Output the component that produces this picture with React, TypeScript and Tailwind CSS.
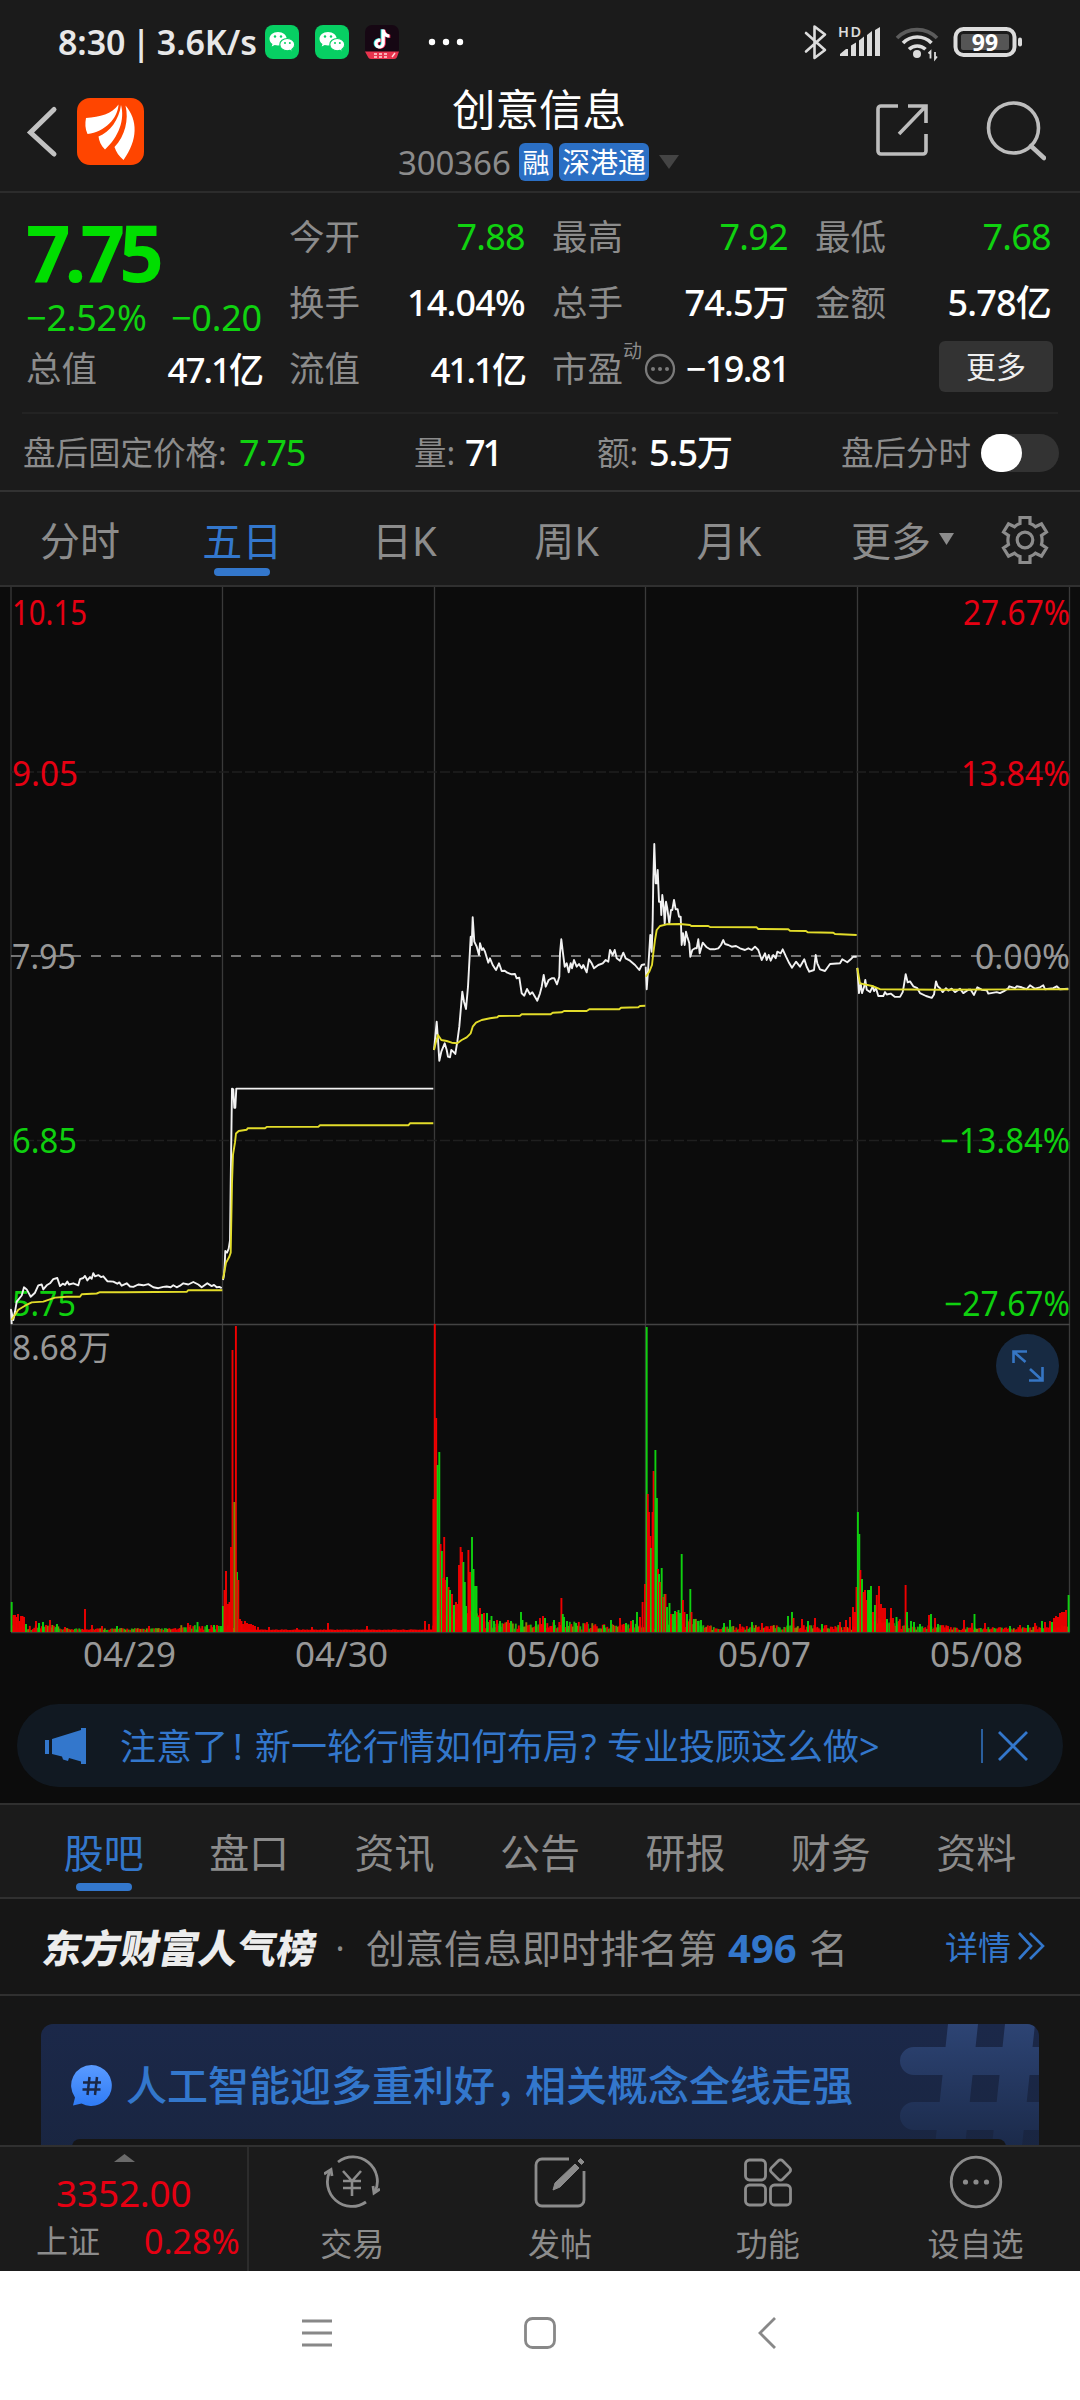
import React from "react";

type Pt = [number, number];

const parse = (s: string): Pt[] =>
  s
    .trim()
    .split(/\s+/)
    .map((p) => p.split(",").map(Number) as Pt);

const toPath = (s: string, sx: number, ox: number, sy: number, oy: number) =>
  "M" +
  parse(s)
    .map(([x, y]) => `${(x / sx + ox).toFixed(1)} ${(y / sy + oy).toFixed(1)}`)
    .join("L");

/* The chart's vertical origin is the top edge of the price pane. */
const TOP = 587;

const priceLines = [
  toPath(
    "35,745 33,710 40,735 45,715 50,690 65,675 72,655 80,660 92,678 105,668 115,650 125,648 130,660 140,650 150,645 160,635 172,632 180,652 188,646 195,649 202,641 207,648 220,645 235,650 240,635 250,632 255,627 262,638 270,630 275,634 280,620 285,628 295,625 303,630 310,628 322,640 340,641 352,646 358,643 365,651 380,645 390,653 400,654 415,648 430,650 445,647 460,655 475,657 490,654 500,653 512,655 520,650 530,655 540,651 550,645 565,648 580,642 595,648 605,655 622,645 635,652 642,649 650,655 658,654 665,657",
    3, 0, 2.45, 1020 - TOP
  ),
  toPath(
    "669,637 672,625 674,600 676,566 681,570 686,560 690,540 692,400 696,168 700,170 703,215 706,215 709,168 1300,168",
    3, 0, 2.45, 1020 - TOP
  ),
  toPath(
    "42,690 50,605 54,660 58,722 64,695 74,670 80,690 84,710 90,712 94,690 100,695 106,702 112,665 118,620 127,515 132,545 138,567 144,500 152,350 155,375 158,292 163,365 170,380 177,405 180,370 186,390 190,385 195,395 205,428 210,415 218,435 228,450 237,430 245,453 254,452 262,458 275,463 285,462 290,475 298,473 305,520 313,527 321,507 330,523 337,517 352,542 360,520 365,500 371,465 377,500 386,480 395,475 403,475 411,493 418,470 420,400 424,358 429,400 434,440 440,430 446,457 452,430 456,445 462,420 470,440 477,432 485,445 490,435 500,457 507,418 515,430 522,445 535,435 548,430 557,420 565,425 570,390 578,405 584,390 590,415 600,422 610,398 617,415 630,422 645,435 658,450 665,435 675,433",
    3, 420, 3, 820 - TOP
  ),
  toPath(
    "677,440 680,508 685,440 691,345 695,395 698,300 700,180 703,72 707,190 710,190 713,150 717,245 722,245 724,285 727,225 731,260 734,312 738,245 742,265 748,310 753,270 757,270 762,240 767,268 773,268 777,290 782,290 785,375 789,340 794,375 798,335 802,350 808,370 811,410 817,390 825,385 830,385 835,358 839,400 848,368 860,382 870,388 883,388 895,385 903,375 910,360 915,372 925,375 935,380 948,378 960,385 975,390 985,385 995,390 1005,380 1015,390 1025,420 1035,400 1040,420 1046,405 1052,422 1060,405 1067,415 1072,395 1082,400 1088,388 1098,410 1108,430 1116,443 1128,425 1140,440 1153,418 1160,440 1168,455 1182,450 1187,405 1192,430 1200,448 1215,453 1230,432 1260,430 1267,418 1282,427 1292,418 1300,410 1310,410",
    3, 420, 3, 820 - TOP
  ),
  toPath(
    "52,140 57,192 62,172 66,192 72,180 76,165 80,185 90,190 98,178 102,188 108,182 115,198 130,198 135,190 140,195 152,193 165,200 180,200 188,190 192,175 197,153 203,170 210,168 220,178 232,182 240,192 258,198 275,202 282,195 288,168 293,178 300,182 308,190 318,182 325,187 335,183 345,190 360,183 370,192 385,185 392,185 402,196 412,180 425,185 440,186 445,193 470,190 480,192 495,187 505,182 508,178 525,182 530,178 545,180 560,184 570,176 585,183 600,180 610,176 615,184 640,182 650,178 660,184 685,183",
    3, 840, 2.063, 900 - TOP
  ),
];

const averageLines = [
  toPath("35,735 55,710 75,700 95,692 130,690 165,680 200,678 240,678 245,672 290,670 300,667 370,667 560,666 565,662 667,662", 3, 0, 2.45, 1020 - TOP),
  toPath("669,635 678,595 688,580 692,570 696,400 699,330 705,300 708,278 716,272 740,269 743,265 795,265 800,262 955,262 960,258 1225,258 1230,253 1300,253", 3, 0, 2.45, 1020 - TOP),
  toPath("42,690 48,665 54,645 64,660 80,663 95,668 112,670 125,660 140,652 152,640 158,620 168,608 185,600 210,595 232,592 236,588 300,587 305,583 392,583 398,578 425,577 432,573 500,573 508,568 598,568 603,563 655,562 660,558 676,557", 3, 420, 3, 820 - TOP),
  toPath("677,470 688,455 696,435 700,400 705,360 710,330 720,318 740,313 780,312 810,315 814,318 865,318 870,321 1010,322 1015,327 1105,328 1110,332 1158,333 1163,337 1240,338 1245,342 1310,345", 3, 420, 3, 820 - TOP),
  toPath("52,140 60,172 100,178 120,184 300,185 685,184", 3, 840, 2.063, 900 - TOP),
];

/* Volume spikes: x, height and colour (r = up, g = down). */
const spikes =
  "11.7,30,g 13.5,17,r 15,17,r 16.5,15,r 18,18,r 19.5,11,r 21,16,r 22.5,16,r 24,15,r 26,8,g 36,11,r 39,9,g 43,10,g 46,7,r 50,12,r 57,8,g 65,5,r 85,23,r 92,7,r 102,6,r 117,6,g 149,6,r 188,9,r 197.5,10,g 207,7,g 214,7,g 217,7,r 221,6,g " +
  "223,26,g 224.5,42,r 226,61,r 228,28,r 229.5,30,r 231,85,r 232.5,282,r 237,60,g 238.3,52,r 235.9,306,r 234.3,130,o 240,13,r 241.5,11,r 243,8,r 245,11,r 247,9,r 249,8,r 251,8,r 253,7,r 255,6,r 258,5,r 269,5,r 297,4,r 312,5,r 328,9,r 367,6,r 425,11,r 429,8,r " +
  "433.4,133,r 434.8,308,r 436.2,214,r 437.7,167,g 439.3,180,g 440.6,88,r 441.8,81,g 443,54,r 444.2,95,r 446,52,r 447,55,g 448.6,45,r 450,42,g 452,38,r 454,27,g 456,30,r 458,28,r 459,67,r 460.6,85,r 462,80,r 463.4,70,g 464.8,50,g 466,26,g 468.4,82,r 470,60,r 472,95,g 473.5,63,g 475,46,g 476.5,46,g 478,15,g 480,24,r 482,18,g 484,19,r 487,19,g 490,12,r 491.5,16,g 494,11,g 497,12,r 500,11,g 508,12,r 511,11,g 521,20,g 522.5,12,g 536,11,g 540,14,r 543,16,r 545,14,g 554,12,g 561.4,34,r 562.8,18,g 564,15,g 567,11,g 576,9,g 587,10,r 604,7,g 611,12,g 620,14,r 626,9,g 631,11,r 633,12,g 637,20,g 640,15,r 642.6,30,r 645,48,r " +
  "646.7,305,g 647.8,138,r 649,120,r 650.4,96,r 651,84,g 652.6,120,r 653.6,161,r 655.4,182,g 656.9,134,g 658,63,r 659,58,g 660,50,r 661.7,64,g 663,35,r 664.5,38,g 665.5,38,r 667,25,g 669.5,29,g 671,18,r 673,18,g 675,21,g 677,20,r 678.5,22,g 680,19,g 681.7,78,g 682.9,32,r 684.5,20,r 687,18,g 690.3,43,g 691.5,20,r 694,13,g 698,11,g 701,12,g 710,6,r 724,9,g 730,12,g 740,8,r 752,10,g 762,9,r 788,16,g 792,20,g 793.5,14,r 802,13,r 808,11,g 815,14,r 822,8,g 840,10,r 846,12,r 850,15,r 853,25,r 855,20,r 856.5,45,r " +
  "857.9,120,g 859.3,98,g 860.4,62,r 862,53,g 863.6,40,r 865,42,r 866.4,32,r 868,42,g 869.5,42,g 871,46,g 873,20,r 875,27,g 876.8,37,r 879,46,r 881,28,r 883,24,r 885,24,r 887,13,g 891,24,r 893,14,r 896.5,15,g 899,11,r 905.6,47,r 907,20,g 911,11,g 914,10,g 920,8,g 929,17,r 931,18,g 935,14,r 938,8,g 948,6,r 964,12,r 972,9,r 974.5,18,g 985,9,r 1010,6,g 1020,7,r 1028,7,g 1035,9,r 1042,11,g 1045,10,r 1050,11,r 1052,10,g 1054,14,r 1056,16,r 1058,15,r 1060,19,r 1062,20,r 1064,20,r 1066,22,r 1068.6,37,g";

const tint: Record<string, string> = { r: "#f00000", g: "#0fd00f", o: "#8a8200" };

function buildVolume() {
  const bars: { x: number; h: number; c: string }[] = [];
  for (let i = 0; i < 705; i++) {
    const x = 11.8 + i * 1.5;
    if (x > 1068) break;
    const n = Math.abs(Math.sin(i * 12.9898) * 43758.5453) % 1;
    const m = Math.abs(Math.sin(i * 78.233) * 12543.123) % 1;
    let base = 2 + n * 5;
    if (x > 60 && x < 180) base = 2 + n * 2;
    if (x > 240 && x < 433) base = 2 + n * 0.6;
    if (x > 480 && x < 580) base = 3 + n * 8;
    if (x > 580 && x < 646) base = 2 + n * 7;
    if (x > 660 && x < 700) base = 4 + n * 12;
    if (x > 857 && x < 900) base = 6 + n * 9;
    if (x > 434 && x < 480) base = 12 + n * 12;
    if (x > 950 && x < 1030) base = 2 + n * 3;
    const quiet = x > 240 && x < 433;
    bars.push({ x, h: base, c: quiet ? tint.r : m < 0.5 ? tint.r : m < 0.8 ? "#1fae0a" : tint.o });
  }
  spikes.split(" ").forEach((s) => {
    const [x, h, c] = s.split(",");
    bars.push({ x: +x, h: +h, c: tint[c] });
  });
  return bars;
}
const volume = buildVolume();

const dayLines = [11, 222.5, 434.5, 645.5, 857.5, 1069.5];

function Label({ x, y, w, end, fill, children }: { x: number; y: number; w: number; end?: boolean; fill: string; children: string }) {
  return (
    <text x={x} y={y} textLength={w} lengthAdjust="spacingAndGlyphs" textAnchor={end ? "end" : "start"} fill={fill} fontSize={34}>
      {children}
    </text>
  );
}

function Chart() {
  const base = 1632 - TOP;
  return (
    <div className="relative h-[1107px]">
      <svg className="block" width="1080" height="1107" viewBox="0 0 1080 1107">
        <g stroke="#3a3a3a" strokeWidth="1.3">
          {dayLines.map((x) => (
            <line key={x} x1={x} x2={x} y1="0" y2={base} />
          ))}
          <line x1="11" x2="1070" y1={1324.5 - TOP} y2={1324.5 - TOP} stroke="#444" />
          <line x1="11" x2="1070" y1={base + 0.5} y2={base + 0.5} />
        </g>
        <g stroke="#1f1f1f" strokeWidth="1.3" strokeDasharray="10 3">
          <line x1="11" x2="1070" y1={772 - TOP} y2={772 - TOP} />
          <line x1="11" x2="1070" y1={1140.5 - TOP} y2={1140.5 - TOP} />
        </g>
        {volume.map((b, i) => (
          <rect key={i} x={b.x - 0.95} y={base - b.h} width="1.9" height={b.h} fill={b.c} />
        ))}
        <line x1="11" x2="1069" y1={956 - TOP} y2={956 - TOP} stroke="#969696" strokeWidth="1.7" strokeDasharray="10 10" />
        <Label x={12} y={38} w={75} fill="#e60012">10.15</Label>
        <Label x={12} y={199} w={66} fill="#e60012">9.05</Label>
        <Label x={12} y={382} w={64} fill="#989898">7.95</Label>
        <Label x={12} y={566} w={65} fill="#0fd00f">6.85</Label>
        <Label x={12} y={729} w={64} fill="#0fd00f">5.75</Label>
        <Label x={12} y={773} w={99} fill="#989898">8.68万</Label>
        <Label x={1070} y={38} w={107} end fill="#e60012">27.67%</Label>
        <Label x={1070} y={199} w={109} end fill="#e60012">13.84%</Label>
        <Label x={1070} y={382} w={95} end fill="#989898">0.00%</Label>
        <Label x={1070} y={566} w={130} end fill="#0fd00f">−13.84%</Label>
        <Label x={1070} y={729} w={126} end fill="#0fd00f">−27.67%</Label>
        <g fill="none" strokeWidth="1.9" strokeLinejoin="round">
          {priceLines.map((d) => (
            <path key={d} d={d} stroke="#f2f2f2" />
          ))}
          {averageLines.map((d) => (
            <path key={d} d={d} stroke="#e2dc2a" />
          ))}
        </g>
        {["04/29", "04/30", "05/06", "05/07", "05/08"].map((d, i) => (
          <Label key={d} x={[83, 295, 507, 718, 930][i]} y={1080} w={93} fill="#989898">
            {d}
          </Label>
        ))}
      </svg>
      <div className="absolute left-[996px] top-[747px] flex h-[63px] w-[63px] items-center justify-center rounded-full bg-[#172a42]">
        <svg width="34" height="34" viewBox="0 0 34 34" fill="none" stroke="#3676c4" strokeWidth="2.6">
          <path d="M2.500 14V2.500H16M2.500 2.500L14.500 13M19 20L31 31M31.500 18V31.500H18" />
        </svg>
      </div>
    </div>
  );
}

function WeChat() {
  return (
    <svg width="34" height="34" viewBox="0 0 34 34">
      <rect width="34" height="34" rx="8" fill="#07cf63" />
      <path d="M13 7c-5 0-8.500 3-8.500 6.800 0 2.200 1.100 4 3 5.200l-.8 2.500 3-1.500c1 .3 2 .5 3.300.5 5 0 8.700-3 8.700-6.700S18 7 13 7z" fill="#fff" />
      <path d="M22.300 13.500c-4.300 0-7.500 2.700-7.500 6.100s3.200 6.100 7.500 6.100c1 0 1.900-.1 2.700-.4l2.500 1.400-.7-2.200c1.800-1.200 2.900-2.900 2.900-4.900 0-3.400-3.200-6.100-7.400-6.100z" fill="#fff" stroke="#07cf63" strokeWidth="1.100" />
      <g fill="#07cf63">
        <circle cx="10" cy="11.500" r="1.200" />
        <circle cx="16" cy="11.500" r="1.200" />
        <circle cx="20" cy="18" r="1" />
        <circle cx="24.800" cy="18" r="1" />
      </g>
    </svg>
  );
}

const Note = ({ fill, dx, dy }: { fill: string; dx: number; dy: number }) => (
  <path transform={`translate(${dx} ${dy})`} d="M16.500 4h3.200c.3 2.800 2 4.600 4.700 4.900v3.200c-1.800 0-3.300-.5-4.600-1.400v6.800c0 3.300-2.400 5.500-5.300 5.500s-5-2.300-5-5c0-3.100 2.600-5.300 5.900-5v3.300c-1.500-.4-2.800.4-2.800 1.800 0 1.200.9 1.900 1.900 1.900 1.200 0 2-.8 2-2.300z" fill={fill} />
);

function StatusBar() {
  return (
    <div className="flex h-[84px] items-center pl-[58px] text-[#e8e8e8]">
      <span className="w-[207px] whitespace-nowrap text-[34px] leading-none font-semibold tracking-[-0.1px] [word-spacing:-2.300px]">8:30 | 3.6K/s</span>
      <div className="flex gap-[16px]">
        <WeChat />
        <WeChat />
        <svg width="34" height="34" viewBox="0 0 34 34">
          <rect width="34" height="31" rx="7" fill="#160713" />
          <Note fill="#25e5e0" dx={-0.9} dy={0.2} />
          <Note fill="#fe2c55" dx={0.9} dy={0.8} />
          <Note fill="#fff" dx={0} dy={0.5} />
          <path d="M0 26.500h34l-2 5.500c-.5 1.300-1.500 2-3 2H6c-1.500 0-2.500-.7-3-2z" fill="#e8344e" />
          <path d="M9 29h3M14 29h3M19 29h3M9 32h3M14 32h3M19 32h3M27 32l3-4" stroke="#ffd9d9" strokeWidth="1.400" />
        </svg>
      </div>
      <svg className="ml-[29px]" width="36" height="8" viewBox="0 0 36 8" fill="#fff">
        <circle cx="4" cy="4" r="3.200" />
        <circle cx="18" cy="4" r="3.200" />
        <circle cx="32" cy="4" r="3.200" />
      </svg>
      <svg className="ml-[338px]" width="222" height="40" viewBox="802 22 222 40">
        <path d="M806 33l19 17-10.500 8V26.500l10.500 8-19 17" fill="none" stroke="#dcdcdc" strokeWidth="2.600" strokeLinejoin="round" strokeLinecap="round" />
        <text x="838" y="37" fontSize="14.500" fontWeight="600" fill="#dcdcdc" textLength="23">HD</text>
        <g fill="#dcdcdc">
          <path d="M840 56v-2l6-5h2v7zM851 56V45.500l5-3V56zM859 56V40.500l5-4V56zM867 56V35l5-4v25zM875 56V30l5-3v29z" />
          <circle cx="917" cy="54" r="4" />
        </g>
        <g fill="none" strokeWidth="3.600">
          <path d="M897 38a28 28 0 0 1 40 0" stroke="#5c5c5c" />
          <path d="M903 43a20 20 0 0 1 28.500 0M909 49.300a12 12 0 0 1 16.500 0" stroke="#dcdcdc" />
        </g>
        <path d="M930.500 58.500v-7l-2 2M935 52v7l2-2.500" stroke="#dcdcdc" strokeWidth="1.800" fill="none" />
        <rect x="955.500" y="29" width="59" height="26" rx="8" fill="none" stroke="#dcdcdc" strokeWidth="4" />
        <rect x="961" y="34" width="48" height="16" rx="2" fill="#555" />
        <rect x="1018" y="37.500" width="4" height="9" rx="2" fill="#dcdcdc" />
        <text x="985" y="50.500" fontSize="23" fontWeight="700" fill="#fff" textAnchor="middle">99</text>
      </svg>
    </div>
  );
}

function Header() {
  return (
    <div className="h-[193px] border-b-2 border-[#2c2c2c] bg-[#1b1b1b]">
      <StatusBar />
      <div className="flex h-[107px]">
        <svg className="mt-[21px] ml-[26px]" width="32" height="54" viewBox="0 0 32 54" fill="none" stroke="#c2c2c2" strokeWidth="5" strokeLinecap="round">
          <path d="M28 4.500L4.500 27.500L28 49" />
        </svg>
        <svg className="mt-[14px] ml-[19px]" width="67" height="67" viewBox="0 0 67 67">
          <rect width="67" height="67" rx="13" fill="#ff4500" />
          <path d="M9 20c14-1 26-4 32.500-13.500C41 20 28 34 10.500 36C8 31 8 25 9 20z" fill="#fff" />
          <path d="M44 7c4 14-2 32-16 44.500C24 47.500 22 43 21.500 38.500C33 34 42 22 44 7z" fill="#fff" />
          <path d="M48.500 7.500C61 22 61 42 46.500 62C42 58 39 54 37.500 49C48 38 52 22 48.500 7.500z" fill="#fff" />
        </svg>
        <div className="ml-[254px] w-[301px]">
          <div className="mt-[3px] pl-[54px] text-[43.500px] leading-[44px] text-white">创意信息</div>
          <div className="mt-[12px] flex h-[38px] items-center">
            <span className="w-[121px] text-[33px] leading-none tracking-[-0.1px] text-[#8c8c8c]">300366</span>
            <span className="flex h-[38px] w-[34px] items-center justify-center rounded-[6px] bg-[#2b6fc4] text-[27px] leading-none text-white">融</span>
            <span className="ml-[6px] flex h-[38px] w-[90px] items-center justify-center rounded-[6px] bg-[#2b6fc4] text-[28px] leading-none whitespace-nowrap text-white">深港通</span>
            <svg className="ml-[10px]" width="20" height="14" viewBox="0 0 20 14">
              <path d="M0 0H20L10 14z" fill="#444" />
            </svg>
          </div>
        </div>
        <svg className="mt-[17px] ml-[176px]" width="56" height="58" viewBox="0 0 56 58" fill="none" stroke="#bdbdbd" strokeWidth="3.600" strokeLinecap="butt">
          <path d="M23 5H6a3 3 0 0 0-3 3V50a3 3 0 0 0 3 3H48a3 3 0 0 0 3-3V33M33 5H51V22M50 6L24 33" />
        </svg>
        <svg className="mt-[16px] ml-[55px]" width="60" height="62" viewBox="0 0 60 62" fill="none" stroke="#bdbdbd" strokeWidth="3.600" strokeLinecap="round">
          <circle cx="27.500" cy="28" r="25" />
          <path d="M45 46L58 58" strokeWidth="4.500" />
        </svg>
      </div>
    </div>
  );
}

function Cell({ label, value, green, tight }: { label: string; value: string; green?: boolean; tight?: boolean }) {
  return (
    <div className="flex h-[66px] w-[236px] items-center justify-between whitespace-nowrap">
      <span className="text-[35.500px] leading-none text-[#8c8c8c]">{label}</span>
      <span
        className={
          green
            ? "text-[36px] leading-none tracking-[-0.7px] text-[#10d210]"
            : tight
              ? "text-[35px] leading-none font-medium tracking-[-2px] text-white"
              : "text-[36px] leading-none font-medium tracking-[-0.8px] text-white"
        }
      >
        {value}
      </span>
    </div>
  );
}

function Quote() {
  return (
    <div className="h-[299px] border-b-2 border-[#323232] bg-[#1b1b1b]">
      <div className="flex h-[219px] pt-[11px] pl-[26px]">
        <div className="w-[236px]">
          <div className="h-[96px] pt-[10px] text-[78px] leading-[76px] font-bold tracking-[-6px] text-[#00de00]">7.75</div>
          <div className="flex h-[36px] items-center justify-between text-[36px] leading-none tracking-[-0.2px] whitespace-nowrap text-[#10d210]">
            <span>−2.52%</span>
            <span>−0.20</span>
          </div>
          <Cell label="总值" value="47.1亿" tight />
        </div>
        <div className="ml-[27px]">
          <Cell label="今开" value="7.88" green />
          <Cell label="换手" value="14.04%" />
          <Cell label="流值" value="41.1亿" tight />
        </div>
        <div className="ml-[27px]">
          <Cell label="最高" value="7.92" green />
          <Cell label="总手" value="74.5万" />
          <div className="flex h-[66px] w-[237px] items-center whitespace-nowrap">
            <span className="text-[35.500px] leading-none text-[#8c8c8c]">市盈</span>
            <span className="mb-[36px] text-[19px] leading-none text-[#8c8c8c]">动</span>
            <svg className="ml-[2px]" width="32" height="32" viewBox="0 0 32 32">
              <circle cx="16" cy="16" r="14" fill="none" stroke="#7a7a7a" strokeWidth="2.300" />
              <g fill="#7a7a7a">
                <circle cx="9" cy="16" r="2" />
                <circle cx="16" cy="16" r="2" />
                <circle cx="23" cy="16" r="2" />
              </g>
            </svg>
            <span className="ml-auto text-[36px] leading-none font-medium tracking-[-1.6px] text-white">−19.81</span>
          </div>
        </div>
        <div className="ml-[26px]">
          <Cell label="最低" value="7.68" green />
          <Cell label="金额" value="5.78亿" />
          <div className="flex h-[61px] w-[238px] items-center justify-end">
            <span className="flex h-[51px] w-[114px] items-center justify-center rounded-[6px] bg-[#333] text-[30px] leading-none text-[#eee]">更多</span>
          </div>
        </div>
      </div>
      <div className="mx-[22px] h-[2px] bg-[#232323]" />
      <div className="flex h-[76px] items-center pt-[2px] pl-[23px] text-[32.500px] leading-none whitespace-nowrap text-[#8c8c8c]">
        <span className="w-[216px]">盘后固定价格:</span>
        <span className="w-[175px] text-[36px] tracking-[-1.4px] text-[#10d210]">7.75</span>
        <span className="w-[51px]">量:</span>
        <span className="w-[132px] text-[36px] font-medium tracking-[-3px] text-white">71</span>
        <span className="w-[52px]">额:</span>
        <span className="w-[192px] text-[36px] font-medium tracking-[-1px] text-white">5.5万</span>
        <span className="w-[140px]">盘后分时</span>
        <span className="flex h-[38px] w-[78px] rounded-full bg-[#333]">
          <span className="h-[38px] w-[41px] rounded-full bg-white" />
        </span>
      </div>
    </div>
  );
}

function PeriodTabs() {
  return (
    <div className="flex h-[95px] items-center border-b-2 border-[#303030] bg-[#1b1b1b] text-[40px] leading-none text-[#8c8c8c]">
      {["分时", "五日", "日K", "周K", "月K"].map((t, i) => (
        <div key={t} className="relative flex h-full w-[162.200px] items-center justify-center pt-[4px] pr-[2px]">
          <span className={i === 1 ? "text-[#3377cc]" : ""}>{t}</span>
          {i === 1 && <span className="absolute bottom-[9px] h-[8px] w-[56px] rounded-full bg-[#3377cc]" />}
        </div>
      ))}
      <span className="ml-[40px] pt-[4px]">更多</span>
      <svg className="ml-[8px]" width="15" height="12" viewBox="0 0 15 12">
        <path d="M0 0H15L7.500 12z" fill="#8c8c8c" />
      </svg>
      <svg className="mt-[2px] ml-[47px]" width="48" height="50" viewBox="0 0 48 50" fill="none" stroke="#8c8c8c" strokeWidth="3.200">
        <path d="M19 2.500H29V8.500C31 9.200 33 10.300 34.500 11.800L40.500 8.800L45.500 17L40.500 20.500C41.300 23.500 41.300 26.500 40.500 29.500L45.500 33L40.500 41.200L34.500 38.200C33 39.700 31 40.800 29 41.500V47.500H19V41.500C17 40.800 15 39.700 13.500 38.200L7.500 41.200L2.500 33L7.500 29.500C6.700 26.500 6.700 23.500 7.500 20.500L2.500 17L7.500 8.800L13.500 11.800C15 10.300 17 9.200 19 8.500z" />
        <circle cx="24" cy="25" r="7.800" />
      </svg>
    </div>
  );
}

function Promo() {
  return (
    <div className="h-[109px] px-[17px] pt-[10px]">
      <div className="flex h-[83px] items-center rounded-full bg-[#111922] pl-[27px] text-[#3377cc]">
        <svg width="42" height="38" viewBox="0 0 42 38" fill="#3377cc">
          <path d="M1 13h4v14H1zM8 12L37 3V1h5v36h-5v-2.500L25 31l-1 3-5-1.500-1-3L8 27z" />
        </svg>
        <span className="ml-[34px] flex pt-[2px] text-[36px] leading-none whitespace-nowrap">
          注意了<span className="w-[27px] pl-[5px]">!</span>新一轮行情如何布局<span className="w-[28px] pl-[2px]">?</span>专业投顾这么做&gt;
        </span>
        <span className="ml-auto h-[34px] w-[2px] bg-[#2a5f9e]" />
        <svg className="mr-[34px] ml-[14px]" width="32" height="32" viewBox="0 0 32 32" stroke="#3377cc" strokeWidth="2.800">
          <path d="M2 2L30 30M30 2L2 30" />
        </svg>
      </div>
    </div>
  );
}

function InfoTabs() {
  return (
    <div className="flex h-[96px] border-t-2 border-b-2 border-[#303030] bg-[#1b1b1b] px-[31px] text-[40px] leading-none text-[#8c8c8c]">
      {["股吧", "盘口", "资讯", "公告", "研报", "财务", "资料"].map((t, i) => (
        <div key={t} className="relative flex flex-1 items-center justify-center pt-[4px]">
          <span className={i === 0 ? "text-[#3377cc]" : ""}>{t}</span>
          {i === 0 && <span className="absolute bottom-[6px] h-[8px] w-[56px] rounded-full bg-[#3377cc]" />}
        </div>
      ))}
    </div>
  );
}

function RankRow() {
  return (
    <div className="flex h-[97px] items-center border-b-2 border-[#303030] bg-[#161616] pt-[2px] pl-[40px] whitespace-nowrap">
      <span className="w-[274px] origin-bottom -skew-x-10 text-[39px] leading-none font-black text-[#ececec]">东方财富人气榜</span>
      <span className="w-[52px] text-center text-[34px] leading-none text-[#8c8c8c]">·</span>
      <span className="w-[362px] text-[39px] leading-none text-[#8c8c8c]">创意信息即时排名第</span>
      <span className="w-[81px] text-[40px] leading-none font-bold text-[#3377cc]">496</span>
      <span className="w-[136px] text-[39px] leading-none text-[#8c8c8c]">名</span>
      <span className="w-[72px] text-[33px] leading-none text-[#3377cc]">详情</span>
      <svg className="-mt-[4px]" width="28" height="28" viewBox="0 0 28 28" fill="none" stroke="#3377cc" strokeWidth="2.600">
        <path d="M2 1L14 14L2 27M13 1L26 14L13 27" />
      </svg>
    </div>
  );
}

function TopicCard() {
  return (
    <div className="h-[149px] overflow-hidden bg-[#161616] px-[41px] pt-[28px]">
      <div className="relative h-[140px] overflow-hidden rounded-t-[12px] bg-linear-to-b from-[#1b2849] to-[#192540]">
        <svg className="absolute top-0 right-0" width="140" height="122" viewBox="0 0 140 122">
          <defs>
            <linearGradient id="hash" x1="0" y1="0" x2="0" y2="122" gradientUnits="userSpaceOnUse">
              <stop offset="0" stopColor="#2d4474" />
              <stop offset="1" stopColor="#1b2a4a" />
            </linearGradient>
          </defs>
          <path fill="url(#hash)" fillRule="nonzero" d="M49 0H79L66 122H36zM106 0H136L123 122H93zM15 23H140V51H15a14 14 0 0 1 0-28zM15 78H140V106H15a14 14 0 0 1 0-28z" />
        </svg>
        <div className="relative flex h-[122px] items-center pl-[29px]">
          <svg width="43" height="43" viewBox="0 0 43 43">
            <defs>
              <linearGradient id="bubble" x1="0" y1="0" x2="0" y2="1">
                <stop offset="0" stopColor="#5a9bff" />
                <stop offset="1" stopColor="#2f7bf5" />
              </linearGradient>
            </defs>
            <path d="M21.500 1a20.500 20.500 0 1 1-10 38.500L3 41.500l2-8A20.500 20.500 0 0 1 21.500 1z" fill="url(#bubble)" />
            <path d="M19.500 13l-2 18M27 13l-2 18M13 18.500h18M12.500 25.500h18" stroke="#1a2745" strokeWidth="2.500" fill="none" />
          </svg>
          <span className="ml-[13px] text-[41px] leading-none font-medium whitespace-nowrap text-[#3377cc]">
            人工智能迎多重利好<span className="-mr-[11px]">，</span>相关概念全线走强
          </span>
        </div>
        <div className="absolute top-[115px] right-[33px] left-[31px] h-[20px] rounded-t-[8px] bg-[#161616]" />
      </div>
    </div>
  );
}

const icon = { width: 56, height: 56, viewBox: "0 0 56 56", fill: "none", stroke: "#8c8c8c", strokeWidth: 2.8 } as const;

const actions = [
  {
    label: "交易",
    art: (
      <svg {...icon}>
        <path d="M14 8A24.500 24.500 0 0 1 51 38M42 48A24.500 24.500 0 0 1 6 17" />
        <path d="M0 20L7 15.500L8 22M56 35L50 39L49 32" />
        <path d="M19 17L28 27L37 17M28 27V42M19 27H37M19 34H37" strokeWidth="2.600" />
      </svg>
    ),
  },
  {
    label: "发帖",
    art: (
      <svg {...icon}>
        <path d="M37 5H10a6 6 0 0 0-6 6V46a6 6 0 0 0 6 6H46a6 6 0 0 0 6-6V17" />
        <path d="M21 36l2-7L43 10l4 4L28 33zM46 7l2.500-2.500 3.500 3.500L49.500 10.500z" fill="#8c8c8c" strokeWidth="1" />
      </svg>
    ),
  },
  {
    label: "功能",
    art: (
      <svg {...icon}>
        <rect x="5.500" y="6" width="20" height="20" rx="4" />
        <rect x="5.500" y="31" width="20" height="20" rx="4" />
        <rect x="30.500" y="31" width="20" height="20" rx="4" />
        <rect x="32.500" y="8" width="16" height="16" rx="3" transform="rotate(45 40.500 16)" />
      </svg>
    ),
  },
  {
    label: "设自选",
    art: (
      <svg {...icon}>
        <circle cx="28" cy="28" r="24.800" />
        <g fill="#8c8c8c" stroke="none">
          <circle cx="17.500" cy="28" r="2.600" />
          <circle cx="28" cy="28" r="2.600" />
          <circle cx="38.500" cy="28" r="2.600" />
        </g>
      </svg>
    ),
  },
];

function BottomBar() {
  return (
    <div className="flex h-[126px] border-t-2 border-[#303030] bg-[#1b1b1b]">
      <div className="flex w-[249px] flex-col border-r-2 border-[#2c2c2c]">
        <svg className="mt-[7px] ml-[114px]" width="21" height="8" viewBox="0 0 21 8">
          <path d="M0 8H21L10.500 0z" fill="#6a6a6a" />
        </svg>
        <span className="mt-[13px] ml-[56px] text-[37px] leading-[36px] tracking-[-0.2px] text-[#e60012]">3352.00</span>
        <div className="mt-[11px] flex items-center pl-[36px] leading-[38px]">
          <span className="w-[108px] text-[32px] text-[#8c8c8c]">上证</span>
          <span className="text-[34px] text-[#e60012]">0.28%</span>
        </div>
      </div>
      <div className="flex flex-1">
        {actions.map((a) => (
          <div key={a.label} className="flex flex-1 flex-col items-center pt-[7px] pr-[1px]">
            {a.art}
            <span className="mt-[15px] text-[32px] leading-[38px] text-[#8c8c8c]">{a.label}</span>
          </div>
        ))}
      </div>
    </div>
  );
}

function SystemNav() {
  return (
    <div className="flex h-[129px] items-center bg-white pb-[6px] pl-[300px]">
      <svg width="34" height="30" viewBox="0 0 34 30" stroke="#888" strokeWidth="2.800">
        <path d="M2 3H32M2 15H32M2 27H32" />
      </svg>
      <svg className="ml-[189px]" width="34" height="34" viewBox="0 0 34 34" fill="none" stroke="#888" strokeWidth="2.800">
        <rect x="2.500" y="2.500" width="29" height="29" rx="7" />
      </svg>
      <svg className="ml-[200px]" width="22" height="34" viewBox="0 0 22 34" fill="none" stroke="#888" strokeWidth="2.800">
        <path d="M18 2L3 17L18 32" />
      </svg>
    </div>
  );
}

export default function App() {
  return (
    <div className="h-[2400px] w-[1080px] overflow-hidden bg-white font-['Noto_Sans','Noto_Sans_CJK_SC',sans-serif]">
      <div className="bg-[#0c0c0c]">
        <Header />
        <Quote />
        <PeriodTabs />
        <Chart />
        <Promo />
        <InfoTabs />
        <RankRow />
        <TopicCard />
        <BottomBar />
      </div>
      <SystemNav />
    </div>
  );
}
